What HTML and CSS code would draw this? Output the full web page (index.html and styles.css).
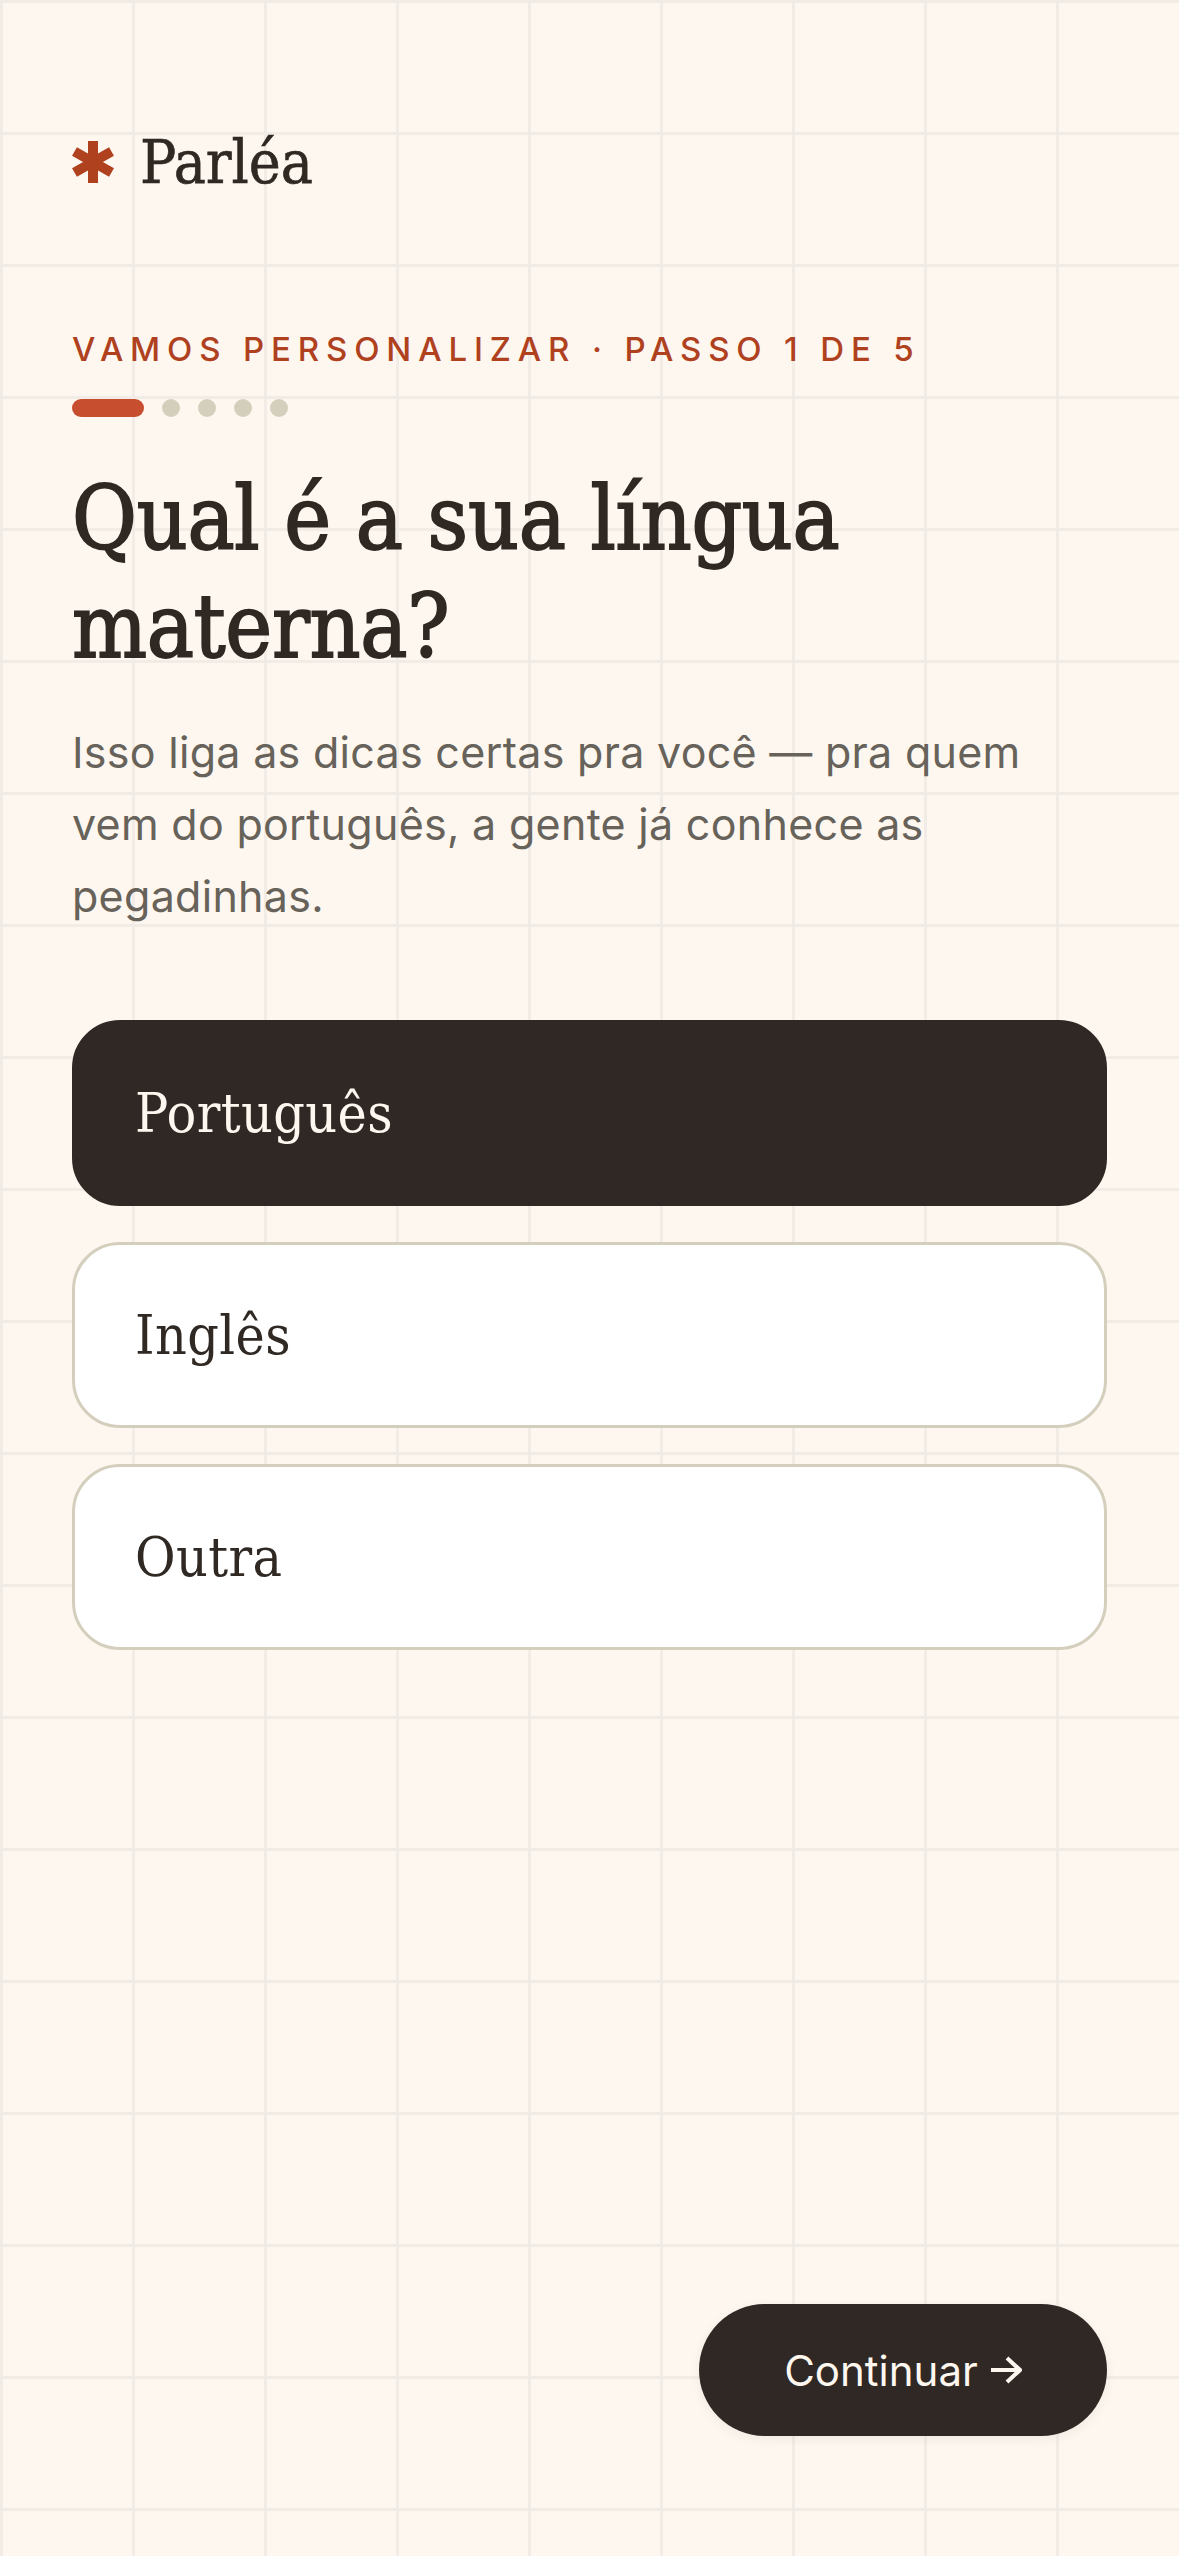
FILE: index.html
```html
<!DOCTYPE html>
<html lang="pt-BR">
<head>
  <meta charset="UTF-8">
  <title>Parléa</title>
  <link rel="stylesheet" href="styles.css">
</head>
<body>

  <main class="pagina">
    <div class="marca">
      <svg class="marca-icone" viewBox="0 0 42 42" aria-hidden="true">
        <path d="M21 0V42M2.5 10.5L39.5 31.5M39.5 10.5L2.5 31.5" />
      </svg>
      <span class="marca-nome">Parléa</span>
    </div>

    <p class="passo">VAMOS PERSONALIZAR · PASSO 1 DE 5</p>

    <div class="progresso">
      <span class="barra"></span>
      <span class="ponto"></span>
      <span class="ponto"></span>
      <span class="ponto"></span>
      <span class="ponto"></span>
    </div>

    <h1>Qual é a sua língua materna?</h1>
    <p class="descricao">Isso liga as dicas certas pra você — pra quem vem do português, a gente já conhece as pegadinhas.</p>

    <div class="opcoes">
      <button class="opcao selecionada">Português</button>
      <button class="opcao">Inglês</button>
      <button class="opcao">Outra</button>
    </div>

    <button class="continuar">Continuar
      <svg class="seta" viewBox="0 0 32 28" aria-hidden="true">
        <path d="M1 14H30M17 2L30 14L17 26" />
      </svg>
    </button>
  </main>

</body>
</html>
```
FILE: styles.css
```css
body {
  margin: 0;
  background-color: #fdf7f0;
  background-image:
    linear-gradient(to right, #f1ece6 3px, transparent 3px),
    linear-gradient(to bottom, #f1ece6 3px, transparent 3px);
  background-size: 132px 132px;
  color: #2f2823;
  font-family: Inter, sans-serif;
}

.pagina {
  display: flex;
  flex-direction: column;
  box-sizing: border-box;
  height: 100vh;
  padding: 132px 72px 120px;
}

.marca {
  display: flex;
  align-items: center;
  gap: 26px;
  height: 60px;
}

.marca-icone {
  width: 42px;
  height: 42px;
  flex-shrink: 0;
}

.marca-icone path {
  fill: none;
  stroke: #b0411f;
  stroke-width: 10;
}

.marca-nome {
  font-family: "DejaVu Serif Condensed", "Liberation Serif", serif;
  font-size: 60px;
  line-height: 60px;
  -webkit-text-stroke: 0.6px #2f2823;
}

.passo {
  margin: 137px 0 0;
  font-size: 33px;
  font-weight: 500;
  line-height: 40px;
  letter-spacing: 6.85px;
  color: #b0411f;
}

.progresso {
  display: flex;
  align-items: center;
  gap: 18px;
  margin-top: 30px;
}

.barra {
  width: 72px;
  height: 18px;
  border-radius: 9px;
  background-color: #c84e30;
}

.ponto {
  width: 18px;
  height: 18px;
  border-radius: 50%;
  background-color: #d4cfbd;
}

h1 {
  margin: 48px 0 0;
  font-family: "DejaVu Serif Condensed", "Liberation Serif", serif;
  font-size: 88px;
  font-weight: 400;
  line-height: 108px;
  letter-spacing: -0.25px;
  -webkit-text-stroke: 1.8px #2f2823;
}

.descricao {
  margin: 35px 0 0;
  max-width: 980px;
  font-size: 43px;
  line-height: 72px;
  letter-spacing: 0.29px;
  color: #67625a;
}

.opcoes {
  display: flex;
  flex-direction: column;
  gap: 36px;
  margin-top: 88px;
}

.opcao {
  height: 186px;
  padding: 0 60px;
  border: 3px solid #d4cfbd;
  border-radius: 48px;
  background-color: #ffffff;
  color: #2f2823;
  font-family: "DejaVu Serif Condensed", "Liberation Serif", serif;
  font-size: 55px;
  letter-spacing: 0.4px;
  text-align: left;
}

.selecionada {
  border-color: #2f2824;
  background-color: #2f2824;
  color: #fdf7f0;
}

.continuar {
  display: flex;
  align-items: center;
  justify-content: center;
  gap: 12px;
  align-self: flex-end;
  width: 408px;
  height: 132px;
  margin-top: auto;
  border: none;
  border-radius: 66px;
  background-color: #2f2824;
  box-shadow: 0 3px 12px rgba(47, 40, 36, 0.06);
  color: #fdf7f0;
  font-family: Inter, sans-serif;
  font-size: 42px;
}

.seta {
  width: 32px;
  height: 28px;
}

.seta path {
  fill: none;
  stroke: #fdf7f0;
  stroke-width: 4;
}
```
